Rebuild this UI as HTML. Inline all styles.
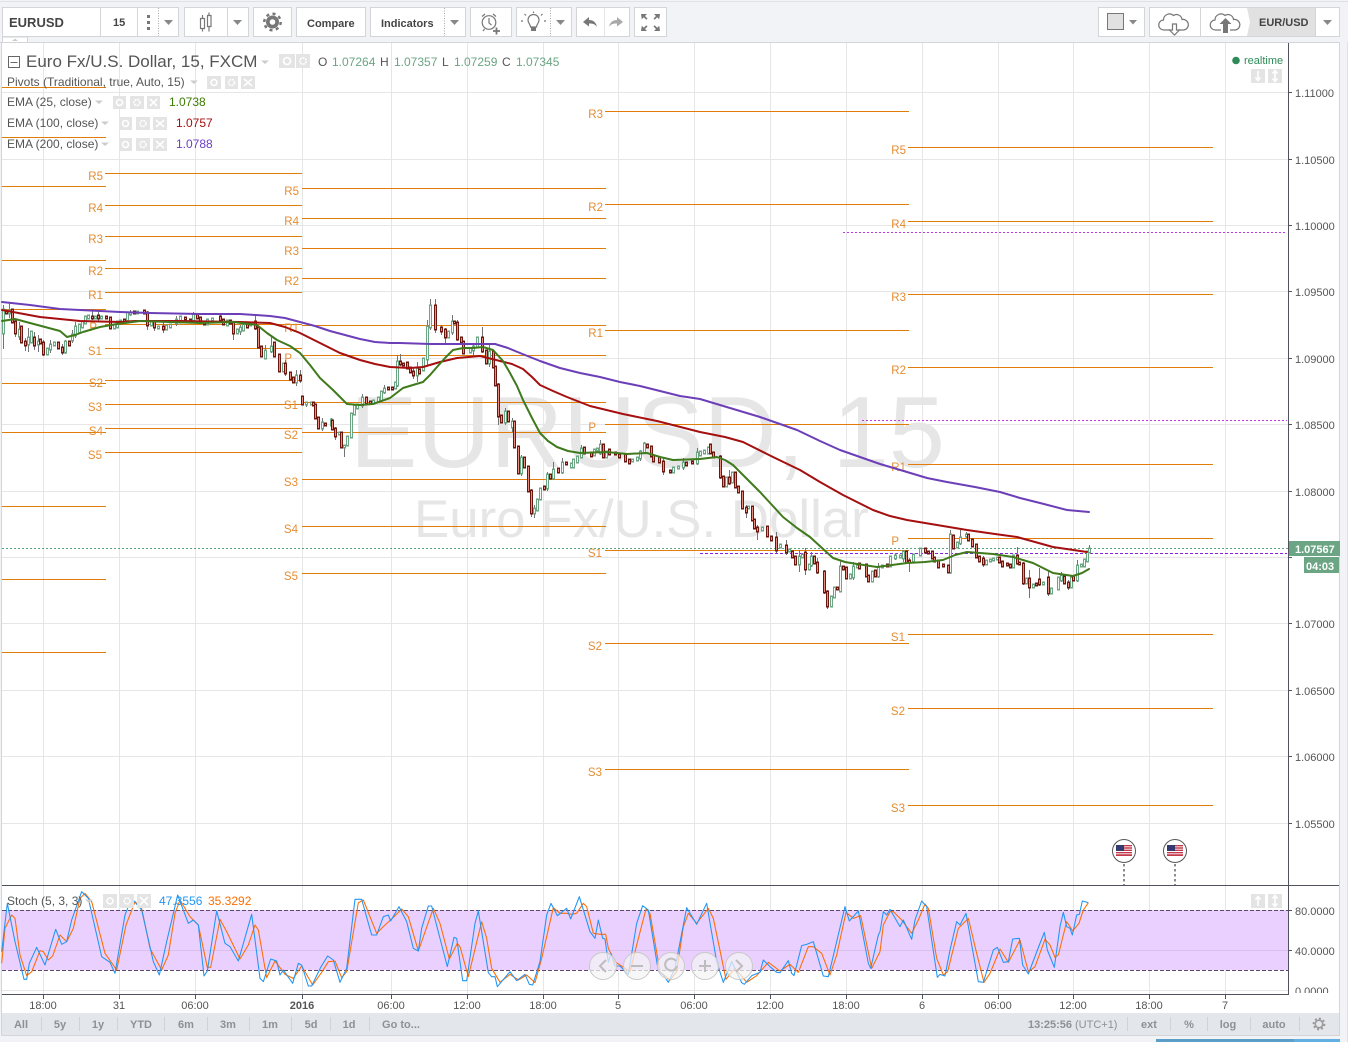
<!DOCTYPE html>
<html><head><meta charset="utf-8"><title>EURUSD</title>
<style>
html,body{margin:0;padding:0;background:#f1f3f6;width:1348px;height:1042px;overflow:hidden}
svg{display:block}
text{font-family:"Liberation Sans",sans-serif}
.btn{fill:#fff;stroke:#d3d5d8;stroke-width:1}
.tb{font-size:11px;font-weight:bold;fill:#444}
.tri{fill:#888}
.ico{fill:none;stroke:#777;stroke-width:1.2}
.grid line{stroke:#e6e6e6;stroke-width:1}
.piv line{stroke:#e07c0a;stroke-width:1}
.piv text{font-size:11.5px;fill:#e58c32}
.ax text{font-size:11px;fill:#555}
.tm text{font-size:11px;fill:#555;text-anchor:middle}
.rg text{font-size:11px;font-weight:bold;fill:#8f9093;text-anchor:middle}
.sep line{stroke:#cfd2d7;stroke-width:1}
.lg{font-size:12px;fill:#555}
.gb{fill:#e4e4e4}
.gi{fill:none;stroke:#fff;stroke-width:1.6}
</style></head><body>
<svg width="1348" height="1042" viewBox="0 0 1348 1042" xmlns="http://www.w3.org/2000/svg">
<rect width="1348" height="1042" fill="#f1f3f6"/>
<rect x="0" y="1" width="1348" height="1" fill="#dfe1e5"/>
<rect x="1347" y="30" width="1" height="1012" fill="#dfe1e5"/>
<!-- chart background -->
<rect x="1.5" y="42.5" width="1338" height="993" fill="#fff" stroke="#d3d5d8"/>
<g shape-rendering="crispEdges">
<g class="grid">
<line x1="43.5" x2="43.5" y1="43" y2="995"/><line x1="119.5" x2="119.5" y1="43" y2="995"/><line x1="195.5" x2="195.5" y1="43" y2="995"/><line x1="302.5" x2="302.5" y1="43" y2="995"/><line x1="391.5" x2="391.5" y1="43" y2="995"/><line x1="467.5" x2="467.5" y1="43" y2="995"/><line x1="543.5" x2="543.5" y1="43" y2="995"/><line x1="618.5" x2="618.5" y1="43" y2="995"/><line x1="694.5" x2="694.5" y1="43" y2="995"/><line x1="770.5" x2="770.5" y1="43" y2="995"/><line x1="846.5" x2="846.5" y1="43" y2="995"/><line x1="922.5" x2="922.5" y1="43" y2="995"/><line x1="998.5" x2="998.5" y1="43" y2="995"/><line x1="1073.5" x2="1073.5" y1="43" y2="995"/><line x1="1149.5" x2="1149.5" y1="43" y2="995"/><line x1="1225.5" x2="1225.5" y1="43" y2="995"/>
<line x1="2" x2="1288" y1="92.5" y2="92.5"/><line x1="2" x2="1288" y1="159.5" y2="159.5"/><line x1="2" x2="1288" y1="225.5" y2="225.5"/><line x1="2" x2="1288" y1="291.5" y2="291.5"/><line x1="2" x2="1288" y1="358.5" y2="358.5"/><line x1="2" x2="1288" y1="424.5" y2="424.5"/><line x1="2" x2="1288" y1="491.5" y2="491.5"/><line x1="2" x2="1288" y1="557.5" y2="557.5"/><line x1="2" x2="1288" y1="623.5" y2="623.5"/><line x1="2" x2="1288" y1="690.5" y2="690.5"/><line x1="2" x2="1288" y1="756.5" y2="756.5"/><line x1="2" x2="1288" y1="823.5" y2="823.5"/>
</g>
</g>
<!-- watermark -->
<text x="350" y="467" font-size="101" fill="#e6e6e6">EURUSD, 15</text>
<text x="414" y="537" font-size="52.8" fill="#e6e6e6">Euro Fx/U.S. Dollar</text>
<!-- pivots -->
<g class="piv">
<g shape-rendering="crispEdges">
<line x1="2" x2="106" y1="87.5" y2="87.5"/><line x1="2" x2="106" y1="137.5" y2="137.5"/><line x1="2" x2="106" y1="186.5" y2="186.5"/><line x1="2" x2="106" y1="260.5" y2="260.5"/><line x1="2" x2="106" y1="309.5" y2="309.5"/><line x1="2" x2="106" y1="383.5" y2="383.5"/><line x1="2" x2="106" y1="432.5" y2="432.5"/><line x1="2" x2="106" y1="506.5" y2="506.5"/><line x1="2" x2="106" y1="579.5" y2="579.5"/><line x1="2" x2="106" y1="652.5" y2="652.5"/>
<line x1="105" x2="302" y1="173.5" y2="173.5"/><line x1="105" x2="302" y1="205.5" y2="205.5"/><line x1="105" x2="302" y1="236.5" y2="236.5"/><line x1="105" x2="302" y1="268.5" y2="268.5"/><line x1="105" x2="302" y1="292.5" y2="292.5"/><line x1="105" x2="302" y1="324.5" y2="324.5"/><line x1="105" x2="302" y1="348.5" y2="348.5"/><line x1="105" x2="302" y1="380.5" y2="380.5"/><line x1="105" x2="302" y1="404.5" y2="404.5"/><line x1="105" x2="302" y1="428.5" y2="428.5"/><line x1="105" x2="302" y1="452.5" y2="452.5"/>
<line x1="302" x2="606" y1="188.5" y2="188.5"/><line x1="302" x2="606" y1="218.5" y2="218.5"/><line x1="302" x2="606" y1="248.5" y2="248.5"/><line x1="302" x2="606" y1="278.5" y2="278.5"/><line x1="302" x2="606" y1="325.5" y2="325.5"/><line x1="302" x2="606" y1="355.5" y2="355.5"/><line x1="302" x2="606" y1="402.5" y2="402.5"/><line x1="302" x2="606" y1="432.5" y2="432.5"/><line x1="302" x2="606" y1="479.5" y2="479.5"/><line x1="302" x2="606" y1="526.5" y2="526.5"/><line x1="302" x2="606" y1="573.5" y2="573.5"/>
<line x1="605" x2="909" y1="111.5" y2="111.5"/><line x1="605" x2="909" y1="204.5" y2="204.5"/><line x1="605" x2="909" y1="330.5" y2="330.5"/><line x1="605" x2="909" y1="424.5" y2="424.5"/><line x1="605" x2="909" y1="550.5" y2="550.5"/><line x1="605" x2="909" y1="643.5" y2="643.5"/><line x1="605" x2="909" y1="769.5" y2="769.5"/>
<line x1="908" x2="1213" y1="147.5" y2="147.5"/><line x1="908" x2="1213" y1="221.5" y2="221.5"/><line x1="908" x2="1213" y1="294.5" y2="294.5"/><line x1="908" x2="1213" y1="367.5" y2="367.5"/><line x1="908" x2="1213" y1="464.5" y2="464.5"/><line x1="908" x2="1213" y1="538.5" y2="538.5"/><line x1="908" x2="1213" y1="634.5" y2="634.5"/><line x1="908" x2="1213" y1="708.5" y2="708.5"/><line x1="908" x2="1213" y1="805.5" y2="805.5"/>
</g>
<g text-anchor="end">
<text x="103" y="180">R5</text><text x="103" y="212">R4</text><text x="103" y="243">R3</text><text x="103" y="275">R2</text><text x="103" y="299">R1</text><text x="97" y="331">P</text><text x="102" y="355">S1</text><text x="103" y="387">S2</text><text x="102" y="411">S3</text><text x="103" y="435">S4</text><text x="102" y="459">S5</text>
<text x="299" y="195">R5</text><text x="299" y="225">R4</text><text x="299" y="255">R3</text><text x="299" y="285">R2</text><text x="299" y="332">R1</text><text x="292" y="362">P</text><text x="298" y="409">S1</text><text x="298" y="439">S2</text><text x="298" y="486">S3</text><text x="298" y="533">S4</text><text x="298" y="580">S5</text>
<text x="603" y="118">R3</text><text x="603" y="211">R2</text><text x="603" y="337">R1</text><text x="596" y="431">P</text><text x="602" y="557">S1</text><text x="602" y="650">S2</text><text x="602" y="776">S3</text>
<text x="906" y="154">R5</text><text x="906" y="228">R4</text><text x="906" y="301">R3</text><text x="906" y="374">R2</text><text x="906" y="471">R1</text><text x="899" y="545">P</text><text x="905" y="641">S1</text><text x="905" y="715">S2</text><text x="905" y="812">S3</text>
</g>
</g>
<!-- alert / dotted lines -->
<g shape-rendering="crispEdges" fill="none">
<path d="M843 232.5H1287" stroke="#c237e6" stroke-dasharray="2 2"/>
<path d="M862 420.5H1287" stroke="#c237e6" stroke-dasharray="2 2"/>
<path d="M700 553.5H1287" stroke="#8a1fe0" stroke-dasharray="3 2"/>
<path d="M2 548.5H1290" stroke="#5ba27f" stroke-dasharray="2 2"/>
</g>
<!-- candles -->
<g transform="translate(.5,0)" fill="none" shape-rendering="crispEdges">
<path stroke="#737375" stroke-width="1" d="M3 305V349M9 302V318M15 320V337M19 322V340M25 338V351M28 328V352M34 332V350M38 335V352M43 340V356M50 340V353M62 344V355M65 340V354M72 330V343M75 322V338M92 310V320M98 312V321M130 310V316M147 311V330M154 320V331M163 322V333M176 316V326M193 312V322M220 314V322M233 321V340M240 325V335M255 315V330M265 345V359M271 336V353M285 360V376M296 370V386M300 370V383M306 402V407M322 418V431M331 418V428M335 427V440M344 446V457M362 394V408M384 385V394M397 355V387M400 354V366M413 368V379M417 362V382M427 320V365M430 299V330M435 299V333M441 325V335M445 328V345M452 315V335M457 320V341M473 344V356M482 327V353M489 345V367M498 383V425M505 408V425M512 418V432M521 455V476M531 489V517M534 505V518M547 472V491M553 462V480M562 458V474M581 445V458M600 440V455M640 450V461M644 442V454M663 458V475M683 458V470M697 448V465M720 455V479M729 470V485M746 505V518M757 525V540M776 532V553M786 540V555M799 550V572M805 548V575M811 552V567M817 558V574M824 570V594M827 590V609M840 560V592M853 562V580M878 563V578M895 553V560M903 550V562M909 558V572M950 530V574M960 530V545M966 532V538M983 556V567M1017 547V565M1023 562V585M1029 570V598M1039 568V586M1048 570V596M1061 572V582M1068 580V590M1077 560V582M1089 545V553"/>
<g stroke="#6ba583" stroke-width="3" stroke-linecap="square"><path id="cu" d="M3 310V333M9 311V313M19 330V336M28 338V344M31 332V342M38 342V344M47 349V354M50 345V349M54 343V345M65 342V352M72 335V340M75 327V335M79 325V332M82 322V327M85 317V323M88 316V318M95 317V318M101 317V318M114 325V328M117 322V327M120 321V322M127 313V320M130 313V314M137 312V313M151 322V325M158 327V328M166 326V329M170 325V327M176 320V323M180 317V322M193 315V320M207 320V324M212 319V320M227 321V325M237 330V333M240 328V331M243 325V330M250 323V325M265 351V358M271 347V351M283 364V371M296 376V382M306 403V404M311 403V404M322 423V428M331 420V425M339 433V434M344 446V447M347 437V445M351 414V437M354 406V414M357 405V408M362 398V405M373 401V403M378 398V401M381 392V400M384 389V392M395 383V388M397 362V385M417 369V375M423 359V370M427 327V359M430 306V327M448 332V337M452 322V332M470 349V352M473 347V350M477 338V347M489 352V363M505 412V422M512 422V427M521 458V473M534 509V513M537 500V510M540 489V499M547 475V488M553 470V478M562 463V472M571 464V467M573 460V467M577 457V462M581 449V457M594 450V455M597 449V450M600 445V453M606 452V457M632 460V461M637 458V460M640 452V458M644 444V452M673 468V472M678 467V468M683 463V467M697 453V463M700 452V455M704 451V453M708 448V453M726 478V486M732 473V482M748 507V508M762 528V530M780 545V547M789 550V551M799 557V564M802 555V557M809 565V569M811 557V565M831 597V606M834 588V597M840 567V591M850 575V578M853 567V577M857 566V567M872 572V581M878 568V576M882 566V567M890 557V566M895 556V558M900 556V557M903 552V558M913 555V561M920 549V555M950 535V572M957 543V547M960 538V543M966 535V536M986 561V564M990 560V561M993 559V560M997 558V559M1013 556V567M1026 579V583M1033 585V587M1043 583V584M1051 589V593M1058 578V589M1061 576V580M1071 578V587M1077 566V580M1081 565V566M1084 560V566M1087 552V561M1089 549V552"/></g>
<use href="#cu" stroke="#f4f9f6" stroke-width="1"/>
<g stroke="#6b1710" stroke-width="3" stroke-linecap="square"><path id="cd" d="M6 312V313M12 310V322M15 322V333M21 327V342M25 342V345M34 338V345M40 340V343M43 343V354M58 343V348M62 348V352M69 342V345M92 317V318M98 316V318M106 317V318M110 318V328M124 320V321M134 312V313M144 311V313M147 313V325M154 322V327M163 327V329M185 318V319M190 320V321M197 315V318M200 318V322M204 322V324M220 317V320M223 320V324M230 321V323M233 323V333M247 323V327M255 322V328M258 328V347M261 347V356M274 343V356M279 355V371M285 364V373M290 373V379M293 378V382M300 376V380M302 397V404M313 403V405M315 405V418M318 418V428M325 424V425M332 421V429M335 429V436M341 433V447M366 398V403M370 402V403M388 388V389M392 388V389M400 362V364M403 364V365M407 363V368M410 368V372M413 372V375M419 370V373M435 306V329M441 328V331M445 330V337M454 322V323M457 323V339M461 338V342M463 342V353M482 338V351M486 351V363M493 352V367M495 367V385M498 385V416M501 416V422M508 412V421M514 422V447M518 447V473M524 458V467M528 467V491M531 491V513M544 487V489M550 475V478M558 469V472M566 463V464M584 448V453M591 453V456M603 445V457M609 450V454M615 453V454M619 455V457M625 455V461M629 460V463M647 445V447M651 447V456M653 456V461M659 458V462M663 462V471M670 471V472M686 463V465M692 462V463M710 445V453M713 453V457M720 457V477M723 477V486M729 478V483M735 473V487M738 487V492M742 492V508M746 508V512M752 507V520M754 520V528M757 528V531M767 527V536M771 537V540M776 538V550M786 546V552M792 552V557M795 557V564M805 553V569M814 557V563M817 563V572M824 572V592M827 592V606M837 588V589M843 567V569M846 568V578M859 564V568M866 565V576M868 576V581M875 571V576M887 565V566M906 552V562M909 561V562M925 549V552M928 552V553M932 552V558M934 558V561M938 561V567M943 565V566M948 566V572M953 536V548M968 535V540M972 540V546M976 545V557M979 557V561M983 559V564M999 558V562M1002 562V566M1007 564V565M1010 565V567M1017 556V563M1019 563V564M1023 564V583M1029 579V587M1036 584V585M1039 580V584M1048 578V593M1064 577V583M1068 583V587M1073 577V580"/></g>
<use href="#cd" stroke="#e98d80" stroke-width="1"/>
</g>
<!-- EMAs -->
<g fill="none" stroke-width="2" stroke-linejoin="round" stroke-linecap="round">
<polyline stroke="#6c3fb8" points="2,302 30,305 60,309 100,311 120,312 150,313 200,314 240,314 270,316 285,318 300,322 315,326 330,331 345,335 360,339 375,342 390,343 400,343 430,344 460,344 495,344 508,348 520,353 540,361 560,368 580,373 600,377 620,382 640,386 680,396 700,399 720,405 740,411 760,417 780,424 797,430 820,441 840,450 860,457 880,464 907,472 927,478 947,482 975,487 1000,492 1020,498 1040,503 1067,510 1089,512"/>
<polyline stroke="#a50f0f" points="2,310 13,312 40,317 80,321 120,322 135,321 180,321 240,322 270,323 285,327 300,333 320,343 340,353 360,360 375,364 390,367 410,368 423,367 440,362 457,358 480,356 500,361 512,364 523,369 532,377 540,385 553,391 567,397 590,406 623,414 657,421 700,432 725,437 743,442 773,457 800,470 820,482 843,495 873,510 890,516 907,520 937,525 967,530 995,534 1017,537 1035,542 1053,547 1087,552"/>
<polyline stroke="#3f7a1c" points="2,321 15,319 30,323 45,327 60,331 67,337 75,335 83,332 100,327 117,324 140,321 170,322 200,323 233,322 257,325 267,333 277,340 290,346 300,353 310,365 320,378 333,390 347,404 360,405 373,404 390,398 403,388 423,382 430,375 437,367 445,358 453,350 463,348 473,348 483,347 493,350 503,361 510,373 517,386 523,400 532,418 540,433 548,441 557,447 568,451 580,453 607,452 627,454 647,453 660,457 673,460 700,459 717,457 725,460 733,465 746,478 760,492 772,505 783,517 797,528 810,537 822,548 833,558 845,562 857,564 877,567 892,565 907,563 925,562 943,560 955,555 967,552 980,553 993,554 1013,557 1033,563 1053,573 1073,576 1082,573 1089,569"/>
</g>
<!-- stoch pane -->
<rect x="2" y="910" width="1286" height="60" fill="#ead0ff"/>
<g shape-rendering="crispEdges">
<path d="M2 950.5H1288" stroke="#d9bfe9"/>
<path d="M2 910.5H1288M2 970.5H1288" stroke="#5d4a6b" stroke-dasharray="4 2"/>
<path d="M2 990.5H1288" stroke="#e6e6e6"/>
</g>
<g fill="none" stroke-width="3.2" stroke-linejoin="round">
<g transform="translate(0,885) scale(.33333)">
<polyline stroke="#ff6d00" points="5,235 15,130 35,90 45,100 60,210 80,272 95,260 120,197 130,200 145,225 158,213 180,150 200,170 220,130 240,40 255,25 275,50 315,205 350,255 378,120 405,50 425,70 450,190 485,255 505,210 525,85 540,45 570,95 595,120 622,247 632,247 660,103 680,140 720,222 745,180 765,120 775,135 800,278 825,228 855,268 880,280 905,243 938,300 965,262 985,230 1005,228 1025,278 1040,260 1075,53 1090,45 1130,145 1150,125 1180,97 1205,72 1225,95 1255,198 1300,70 1320,115"/>
<polyline stroke="#2196f3" points="5,200 22,55 45,170 72,283 80,283 88,235 110,187 135,240 167,133 185,178 200,170 215,105 245,20 265,40 305,215 330,232 345,265 375,90 395,40 425,75 460,230 478,270 500,170 533,30 565,115 580,105 595,120 612,273 622,258 650,78 675,175 690,185 715,228 755,88 780,280 790,290 812,222 830,228 840,270 850,255 878,295 895,235 905,240 925,303 935,303 962,247 983,213 1000,225 1020,292 1040,250 1065,43 1085,43 1115,150 1130,150 1150,95 1165,90 1172,108 1197,65 1220,110 1240,190 1255,198 1265,130 1285,63 1295,63 1320,160"/>
</g>
<g transform="translate(440,885) scale(.33333)">
<polyline stroke="#ff6d00" points="0,115 28,222 52,175 60,185 85,275 125,110 140,160 155,250 180,292 210,268 235,285 260,270 285,293 305,220 340,68 360,85 380,85 395,88 410,85 430,55 440,65 460,145 480,148 497,148 505,190 525,230 570,260 590,180 618,72 630,85 660,260 690,285 710,260 730,125 745,85 770,115 805,70 820,100 858,283 885,250 920,292 950,272 985,232 1020,258 1050,238 1075,262 1105,185 1120,185 1145,205 1170,270 1190,210 1218,82 1240,100 1262,92 1295,250 1320,200"/>
<polyline stroke="#2196f3" points="0,160 22,245 42,157 50,160 68,287 80,287 105,115 115,78 145,263 155,275 165,275 172,305 210,260 230,287 255,268 268,298 278,300 300,230 320,90 333,55 352,92 380,70 392,102 418,35 450,140 465,160 475,105 488,160 495,162 505,232 513,205 525,243 540,243 565,268 590,115 608,62 625,75 655,258 670,270 685,292 705,250 740,68 770,118 800,55 830,230 850,292 875,230 905,293 913,298 935,272 960,262 970,225 990,245 1010,262 1020,263 1045,227 1055,265 1062,272 1085,182 1100,178 1120,170 1150,273 1165,275 1215,65 1228,108 1255,78 1285,235 1292,250 1315,150 1320,140"/>
</g>
<g transform="translate(880,830) scale(.33333)">
<polyline stroke="#ff6d00" points="0,365 10,285 30,245 40,245 65,270 95,310 115,270 135,222 145,235 170,385 190,435 203,425 235,295 265,265 290,370 312,457 330,430 360,357 385,397 420,330 445,425 465,410 495,328 510,345 525,382 535,375 560,275 578,303 597,280 610,240 625,218"/>
<polyline stroke="#2196f3" points="0,305 10,245 20,255 30,238 60,290 70,270 95,328 105,270 125,213 140,230 155,330 172,442 180,433 195,438 210,360 230,275 240,285 258,250 295,455 310,457 340,360 352,352 370,397 385,395 398,327 418,325 428,405 445,432 478,345 493,307 502,360 523,412 540,290 550,247 560,290 570,295 577,315 590,255 598,253 607,213 625,218"/>
</g>
</g>
<!-- nav buttons -->
<g fill="#f4f4f4" fill-opacity=".72" stroke="#c9c9c9" stroke-width="1">
<circle cx="603" cy="966" r="13.5"/><circle cx="637" cy="966" r="13.5"/><circle cx="671" cy="966" r="13.5"/><circle cx="705" cy="966" r="13.5"/><circle cx="739" cy="966" r="13.5"/>
</g>
<g fill="none" stroke="#bdbdbd" stroke-width="2">
<path d="M606 960l-6 6 6 6"/><path d="M631 966h12"/><path d="M676 961a6 6 0 1 0 1 5"/><path d="M699 966h12M705 960v12"/><path d="M736 960l6 6-6 6"/>
</g>
<!-- axes -->
<g shape-rendering="crispEdges" stroke="#50535e">
<path d="M1288.5 43V995" fill="none"/>
<path d="M2 885.5H1339" fill="none"/>
<path d="M2 994.5H1289" fill="none"/>
<path d="M1288 92.5h4M1288 159.5h4M1288 225.5h4M1288 291.5h4M1288 358.5h4M1288 424.5h4M1288 491.5h4M1288 557.5h4M1288 623.5h4M1288 690.5h4M1288 756.5h4M1288 823.5h4M1288 910.5h4M1288 950.5h4M43.5 995v4M119.5 995v4M195.5 995v4M302.5 995v4M391.5 995v4M467.5 995v4M543.5 995v4M618.5 995v4M694.5 995v4M770.5 995v4M846.5 995v4M922.5 995v4M998.5 995v4M1073.5 995v4M1149.5 995v4M1225.5 995v4" fill="none"/>
</g>
<g class="ax">
<text x="1295" y="97">1.11000</text><text x="1295" y="164">1.10500</text><text x="1295" y="230">1.10000</text><text x="1295" y="296">1.09500</text><text x="1295" y="363">1.09000</text><text x="1295" y="429">1.08500</text><text x="1295" y="496">1.08000</text><text x="1295" y="628">1.07000</text><text x="1295" y="695">1.06500</text><text x="1295" y="761">1.06000</text><text x="1295" y="828">1.05500</text>
<text x="1295" y="915">80.0000</text><text x="1295" y="955">40.0000</text>
</g>
<svg x="1289" y="980" width="50" height="13"><text x="6" y="15" font-size="11" fill="#555">0.0000</text></svg>
<rect x="1289" y="541" width="51" height="15" fill="#6ba583"/>
<path d="M1288 548.5l-2 0" stroke="#6ba583"/>
<text x="1295" y="553" font-size="11" font-weight="bold" fill="#fff">1.07567</text>
<rect x="1304" y="557" width="35" height="16" fill="#6ba583"/>
<text x="1306" y="570" font-size="11" font-weight="bold" fill="#fff">04:03</text>
<!-- time axis -->
<g class="tm">
<text x="43" y="1009">18:00</text><text x="119" y="1009">31</text><text x="195" y="1009">06:00</text><text x="302" y="1009" font-weight="bold">2016</text><text x="391" y="1009">06:00</text><text x="467" y="1009">12:00</text><text x="543" y="1009">18:00</text><text x="618" y="1009">5</text><text x="694" y="1009">06:00</text><text x="770" y="1009">12:00</text><text x="846" y="1009">18:00</text><text x="922" y="1009">6</text><text x="998" y="1009">06:00</text><text x="1073" y="1009">12:00</text><text x="1149" y="1009">18:00</text><text x="1225" y="1009">7</text>
</g>
<!-- flags -->
<g>
<path d="M1124 864V885M1175 864V885" stroke="#8c8c8c" stroke-width="2" stroke-dasharray="2.5 2.5"/>
<circle cx="1124" cy="851" r="11.5" fill="#fff" stroke="#555" stroke-width="1"/>
<circle cx="1175" cy="851" r="11.5" fill="#fff" stroke="#555" stroke-width="1"/>
<g><rect x="1116" y="845" width="16" height="11" fill="#c3384a"/><path d="M1116 846.8h16M1116 849.2h16M1116 851.5h16M1116 853.8h16" stroke="#fff" stroke-width=".9"/><rect x="1116" y="845" width="8" height="6" fill="#343a70"/></g>
<g transform="translate(51,0)"><rect x="1116" y="845" width="16" height="11" fill="#c3384a"/><path d="M1116 846.8h16M1116 849.2h16M1116 851.5h16M1116 853.8h16" stroke="#fff" stroke-width=".9"/><rect x="1116" y="845" width="8" height="6" fill="#343a70"/></g>
</g>
<!-- legend -->
<rect x="8.5" y="56.5" width="11" height="11" fill="#fff" stroke="#666"/><path d="M10.5 62.5h7" stroke="#666"/>
<text x="26" y="67" font-size="17" fill="#555">Euro Fx/U.S. Dollar, 15, FXCM</text>
<path d="M261 60.5h8l-4 3.5z" fill="#ccc"/>
<rect class="gb" x="279" y="54" width="16" height="14"/><circle class="gi" cx="287" cy="61" r="3.5"/>
<rect class="gb" x="296" y="54" width="14" height="14"/><circle class="gi" cx="303" cy="61" r="3.2" stroke-dasharray="2 .8" stroke-width="2.2"/>
<text x="318" y="66" font-size="12" fill="#555">O</text><text x="332" y="66" font-size="12" fill="#6ba583">1.07264</text>
<text x="380" y="66" font-size="12" fill="#555">H</text><text x="394" y="66" font-size="12" fill="#6ba583">1.07357</text>
<text x="442" y="66" font-size="12" fill="#555">L</text><text x="454" y="66" font-size="12" fill="#6ba583">1.07259</text>
<text x="502" y="66" font-size="12" fill="#555">C</text><text x="516" y="66" font-size="12" fill="#6ba583">1.07345</text>
<text class="lg" x="7" y="86">Pivots (Traditional, true, Auto, 15)</text>
<path d="M190 80.5h8l-4 3.5z" fill="#ccc"/>
<rect class="gb" x="207" y="76" width="14" height="13"/><circle class="gi" cx="214" cy="82.5" r="3"/>
<rect class="gb" x="225" y="76" width="13" height="13"/><circle class="gi" cx="231.5" cy="82.5" r="3" stroke-dasharray="2 .8" stroke-width="2.2"/>
<rect class="gb" x="241" y="76" width="14" height="13"/><path class="gi" d="M244 79l8 7M252 79l-8 7"/>
<text class="lg" x="7" y="106">EMA (25, close)</text>
<path d="M95 100.5h8l-4 3.5z" fill="#ccc"/>
<rect class="gb" x="113" y="96" width="13" height="13"/><circle class="gi" cx="119.5" cy="102.5" r="3"/>
<rect class="gb" x="130" y="96" width="14" height="13"/><circle class="gi" cx="137" cy="102.5" r="3" stroke-dasharray="2 .8" stroke-width="2.2"/>
<rect class="gb" x="147" y="96" width="13" height="13"/><path class="gi" d="M150 99l7 7M157 99l-7 7"/>
<text x="169" y="106" font-size="12" fill="#3d7a00">1.0738</text>
<text class="lg" x="7" y="127">EMA (100, close)</text>
<path d="M101 121.5h8l-4 3.5z" fill="#ccc"/>
<rect class="gb" x="119" y="117" width="13" height="13"/><circle class="gi" cx="125.5" cy="123.5" r="3"/>
<rect class="gb" x="136" y="117" width="14" height="13"/><circle class="gi" cx="143" cy="123.5" r="3" stroke-dasharray="2 .8" stroke-width="2.2"/>
<rect class="gb" x="153" y="117" width="14" height="13"/><path class="gi" d="M156 120l8 7M164 120l-8 7"/>
<text x="176" y="127" font-size="12" fill="#a50f0f">1.0757</text>
<text class="lg" x="7" y="148">EMA (200, close)</text>
<path d="M101 142.5h8l-4 3.5z" fill="#ccc"/>
<rect class="gb" x="119" y="138" width="13" height="13"/><circle class="gi" cx="125.5" cy="144.5" r="3"/>
<rect class="gb" x="136" y="138" width="14" height="13"/><circle class="gi" cx="143" cy="144.5" r="3" stroke-dasharray="2 .8" stroke-width="2.2"/>
<rect class="gb" x="153" y="138" width="14" height="13"/><path class="gi" d="M156 141l8 7M164 141l-8 7"/>
<text x="176" y="148" font-size="12" fill="#6c3fc4">1.0788</text>
<circle cx="1236" cy="60.5" r="3.8" fill="#2e8b57"/>
<text x="1244" y="64" font-size="11" fill="#2e8b57">realtime</text>
<rect class="gb" x="1251" y="69" width="14" height="14"/><path class="gi" d="M1258 71v9M1255.5 77.5l2.5 3 2.5-3"/>
<rect class="gb" x="1268" y="69" width="14" height="14"/><path class="gi" d="M1275 71v10M1272.5 73.5l2.5-3 2.5 3M1272.5 78.5l2.5 3 2.5-3"/>
<!-- stoch legend -->
<text class="lg" x="7" y="905">Stoch (5, 3, 3)</text>
<path d="M85 899.5h8l-4 3.5z" fill="#ccc"/>
<rect class="gb" x="103" y="894" width="14" height="14"/><circle class="gi" cx="110" cy="901" r="3"/>
<rect class="gb" x="120" y="894" width="14" height="14"/><circle class="gi" cx="127" cy="901" r="3" stroke-dasharray="2 .8" stroke-width="2.2"/>
<rect class="gb" x="137" y="894" width="14" height="14"/><path class="gi" d="M140 897l8 8M148 897l-8 8"/>
<text x="159" y="905" font-size="12" fill="#2196f3">47.3556</text>
<text x="208" y="905" font-size="12" fill="#ff6d00">35.3292</text>
<rect class="gb" x="1251" y="894" width="14" height="14"/><path class="gi" d="M1258 906v-9M1255.5 899.5l2.5-3 2.5 3"/>
<rect class="gb" x="1268" y="894" width="14" height="14"/><path class="gi" d="M1275 896v10M1272.5 898.5l2.5-3 2.5 3M1272.5 903.5l2.5 3 2.5-3"/>
<!-- bottom bar -->
<rect x="2" y="1013" width="1337" height="22" fill="#e3e6eb"/>
<g class="rg">
<text x="21" y="1028">All</text><text x="60" y="1028">5y</text><text x="98" y="1028">1y</text><text x="141" y="1028">YTD</text><text x="186" y="1028">6m</text><text x="228" y="1028">3m</text><text x="270" y="1028">1m</text><text x="311" y="1028">5d</text><text x="349" y="1028">1d</text><text x="401" y="1028">Go to...</text>
<text x="1149" y="1028">ext</text><text x="1189" y="1028">%</text><text x="1228" y="1028">log</text><text x="1274" y="1028">auto</text>
</g>
<text x="1028" y="1028" font-size="11" font-weight="bold" fill="#8f9093">13:25:56</text>
<text x="1075" y="1028" font-size="11" fill="#8f9093">(UTC+1)</text>
<g class="sep" shape-rendering="crispEdges">
<line x1="41.5" x2="41.5" y1="1017" y2="1031"/><line x1="79.5" x2="79.5" y1="1017" y2="1031"/><line x1="117.5" x2="117.5" y1="1017" y2="1031"/><line x1="164.5" x2="164.5" y1="1017" y2="1031"/><line x1="207.5" x2="207.5" y1="1017" y2="1031"/><line x1="249.5" x2="249.5" y1="1017" y2="1031"/><line x1="291.5" x2="291.5" y1="1017" y2="1031"/><line x1="330.5" x2="330.5" y1="1017" y2="1031"/><line x1="369.5" x2="369.5" y1="1017" y2="1031"/><line x1="1127.5" x2="1127.5" y1="1017" y2="1031"/><line x1="1170.5" x2="1170.5" y1="1017" y2="1031"/><line x1="1207.5" x2="1207.5" y1="1017" y2="1031"/><line x1="1250.5" x2="1250.5" y1="1017" y2="1031"/><line x1="1299.5" x2="1299.5" y1="1017" y2="1031"/>
</g>
<circle cx="1319" cy="1024" r="3.8" fill="none" stroke="#9a9a9a" stroke-width="1.6"/>
<circle cx="1319" cy="1024" r="5.4" fill="none" stroke="#9a9a9a" stroke-width="2" stroke-dasharray="2 2.2"/>
<rect x="1156" y="1039" width="138" height="3" fill="#5b9fc9"/><rect x="1294" y="1039" width="46" height="3" fill="#62b0e2"/>
<!-- toolbar -->
<rect x="0" y="2" width="1348" height="40" fill="#f1f3f6"/>
<rect x="0" y="42" width="1340" height="1" fill="#d3d5d8"/>
<rect x="2.5" y="37" width="25" height="5.5" fill="#fff" stroke="#d3d5d8"/><path d="M12 41l3-2.5 3 2.5z" fill="#ccc"/>
<g class="btn">
<rect x="2.5" y="7.5" width="176" height="29"/>
<rect x="184.5" y="7.5" width="64" height="29"/>
<rect x="253.5" y="7.5" width="38" height="29"/>
<rect x="296.5" y="7.5" width="69" height="29"/>
<rect x="370.5" y="7.5" width="95" height="29"/>
<rect x="470.500" y="7.5" width="41" height="29"/>
<rect x="516.5" y="7.5" width="55" height="29"/>
<rect x="576.5" y="7.5" width="53" height="29"/>
<rect x="634.5" y="7.5" width="32" height="29"/>
<rect x="1098.5" y="7.5" width="46" height="29"/>
<rect x="1149.5" y="7.5" width="190" height="29"/>
</g>
<path d="M1247 8h69v28h-69l3-14z" fill="#e1e1e1"/>
<g shape-rendering="crispEdges" stroke="#d3d5d8" fill="none">
<path d="M100.5 8V36M137.5 8V36M227.5 8V36M1200.5 8V36M1315.5 8V36"/>
<path d="M158.5 8V36M444.5 8V36M550.5 8V36" stroke-dasharray="1 1.5" stroke="#aaa"/>
<path d="M604.5 8V36" stroke="#e3e5e8"/>
</g>
<text x="9" y="27" font-size="13" font-weight="bold" fill="#444">EURUSD</text>
<text x="113" y="26" class="tb">15</text>
<g fill="#777"><rect x="147" y="15" width="3" height="3"/><rect x="147" y="21" width="3" height="3"/><rect x="147" y="27" width="3" height="3"/></g>
<path class="tri" d="M164 20h9l-4.5 5z"/>
<path class="ico" d="M200.500 18.500h4v10h-4zM202.500 15v3.500M202.500 28.500v3M207.500 15.500h3.500v11h-3.500zM209 12.500v3M209 26.500v5"/>
<path class="tri" d="M233 20h9l-4.5 5z"/>
<g fill="#777"><circle cx="272.500" cy="22" r="6.500"/></g>
<circle cx="272.500" cy="22" r="8.200" fill="none" stroke="#777" stroke-width="2.500" stroke-dasharray="3 3.400"/>
<circle cx="272.500" cy="22" r="2.800" fill="#fff"/>
<text x="307" y="27" class="tb">Compare</text>
<text x="381" y="27" class="tb">Indicators</text>
<path class="tri" d="M450 20h9l-4.5 5z"/>
<g class="ico"><circle cx="489" cy="22.500" r="6.800"/><path d="M489 18v5l2.500 2M482 16.500l3-2.500M496 16.500l-3-2.500M484.500 29l-1.500 2"/></g>
<path d="M493 31h7M496.500 27.500v7" stroke="#777" stroke-width="1.800" fill="none"/>
<g class="ico"><path d="M530.500 27c0-3-2.500-3.500-2.500-7a5.500 5.500 0 0 1 11 0c0 3.500-2.500 4-2.500 7z"/><path d="M533.500 13v-1.500M526 15.500l-1.500-1.500M541 15.500l1.500-1.500M523 21h-2M544 21h2"/></g>
<rect x="531" y="27" width="5" height="4" fill="#777"/>
<path class="tri" d="M556 20h9l-4.500 5z"/>
<path d="M583 22l6-5v3c4 0 7 2 8 7-2-3-4-3.500-8-3.500v3z" fill="#777"/>
<path d="M623 22l-6-5v3c-4 0-7 2-8 7 2-3 4-3.500 8-3.500v3z" fill="#a9a9a9"/>
<g fill="#777"><path d="M641 14h6l-2 2 2.500 2.500-1.200 1.200-2.500-2.500-2 2zM660 14h-6l2 2-2.500 2.500 1.200 1.200 2.500-2.500 2 2zM641 31h6l-2-2 2.500-2.500-1.200-1.200-2.500 2.500-2-2zM660 31h-6l2-2-2.500-2.500 1.200-1.200 2.500 2.500 2-2z"/></g>
<rect x="1107.500" y="13.500" width="16" height="16" fill="#e1e1e1" stroke="#777"/>
<path class="tri" d="M1129 20h8l-4 4.500z"/>
<g class="ico"><path d="M1170 30h-6a5 5 0 0 1-.5-10 6 6 0 0 1 10-4.500 5.500 5.500 0 0 1 8.500 4 5.300 5.300 0 0 1 2 10.500h-5.500"/><path d="M1172.500 24h4v6h3l-5 5-5-5h3z"/></g>
<g class="ico"><path d="M1221 30h-5.500a5 5 0 0 1-.5-10 6 6 0 0 1 10-4.500 5.500 5.500 0 0 1 8.500 4 5.300 5.300 0 0 1 2 10.500h-5.500"/></g>
<path d="M1225.500 18l6 6h-3.500v9h-5v-9h-3.500z" fill="#777"/>
<text x="1259" y="26" class="tb">EUR/USD</text>
<path class="tri" d="M1323 20h9l-4.5 5z"/>
</svg>
</body></html>
